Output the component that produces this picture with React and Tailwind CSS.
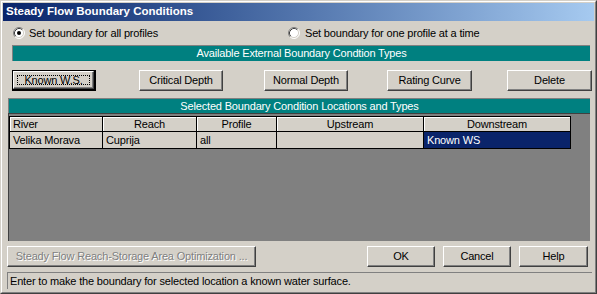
import React from 'react';

const Radio = ({ checked }) => (
  <svg width="12" height="12" viewBox="0 0 12 12" className="shrink-0">
    <circle cx="6" cy="6" r="5" fill="#fff" />
    <path d="M2.11 9.89 A5.5 5.5 0 0 1 9.89 2.11" fill="none" stroke="#808080" strokeWidth="1" />
    <path d="M9.89 2.11 A5.5 5.5 0 0 1 2.11 9.89" fill="none" stroke="#fff" strokeWidth="1" />
    <path d="M2.82 9.18 A4.5 4.5 0 0 1 9.18 2.82" fill="none" stroke="#404040" strokeWidth="1" />
    <path d="M9.18 2.82 A4.5 4.5 0 0 1 2.82 9.18" fill="none" stroke="#d4d0c8" strokeWidth="1" />
    {checked && <circle cx="6" cy="6" r="2" fill="#000" />}
  </svg>
);

const Btn = ({ children, className = '', def = false, disabled = false }) => {
  if (def) {
    return (
      <div className={`border border-black border-r-2 border-b-2 ${className}`}>
        <div className="h-full border-t border-l border-white border-r border-b border-r-[#404040] border-b-[#404040] shadow-[inset_-1px_-1px_0_#808080] bg-[#d4d0c8] p-[3px]">
          <div className="h-full border border-dotted border-black flex items-center justify-center">{children}</div>
        </div>
      </div>
    );
  }
  return (
    <div
      className={`border-t border-l border-white border-r border-b border-r-[#404040] border-b-[#404040] shadow-[inset_-1px_-1px_0_#808080] bg-[#d4d0c8] flex items-center justify-center ${
        disabled ? 'text-[#808080] [text-shadow:1px_1px_0_#fff]' : ''
      } ${className}`}
    >
      {children}
    </div>
  );
};

const TealBar = ({ children, className = '' }) => (
  <div
    className={`bg-[#008080] border-t border-l border-[#808080] border-r-white border-b-white text-white flex items-center justify-center leading-none ${className}`}
  >
    {children}
  </div>
);

const cols = [
  { name: 'River', left: true },
  { name: 'Reach' },
  { name: 'Profile' },
  { name: 'Upstream' },
  { name: 'Downstream' },
];

const row = ['Velika Morava', 'Cuprija', 'all', '', 'Known WS'];

export default function App() {
  return (
    <div className="w-[597px] h-[294px] overflow-hidden bg-[#d4d0c8] font-['Liberation_Sans',Arial,sans-serif] text-[11px] tracking-[-0.17px] text-black">
      <div className="w-full h-full border border-[#d4d0c8] border-r-[#404040] border-b-[#404040]">
        <div className="w-full h-full border border-white border-r-[#808080] border-b-[#808080] p-[1px] flex flex-col">
          {/* title bar */}
          <div className="h-[18px] shrink-0 bg-gradient-to-r from-[#0a246a] to-[#a6caf0] flex items-center pl-[3px]">
            <span className="text-white font-bold text-[11.5px] tracking-normal leading-none">Steady Flow Boundary Conditions</span>
          </div>

          {/* radios */}
          <div className="mt-[6px] h-[12px] flex items-center">
            <div className="ml-[10px] flex items-center">
              <Radio checked />
              <span className="ml-[4px] leading-none">Set boundary for all profiles</span>
            </div>
            <div className="ml-[130px] flex items-center">
              <Radio />
              <span className="ml-[5px] leading-none">Set boundary for one profile at a time</span>
            </div>
          </div>

          <TealBar className="mt-[6px] ml-[9px] w-[578px] h-[16px]">Available External Boundary Condtion Types</TealBar>

          {/* boundary type buttons */}
          <div className="mt-[9px] flex h-[21px]">
            <Btn def className="ml-[9px] w-[84px]">Known W.S.</Btn>
            <Btn className="ml-[43px] w-[84px]">Critical Depth</Btn>
            <Btn className="ml-[41px] w-[84px]">Normal Depth</Btn>
            <Btn className="ml-[39px] w-[85px]">Rating Curve</Btn>
            <Btn className="ml-[35px] w-[85px]">Delete</Btn>
          </div>

          <TealBar className="mt-[7px] ml-[5px] w-[582px] h-[15px]">Selected Boundary Condition Locations and Types</TealBar>

          {/* grid */}
          <div className="ml-[5px] w-[582px] h-[128px] bg-[#808080] border-t border-l border-[#404040] border-r-white border-b-white pt-[2px]">
            <div className="grid grid-cols-[93px_94px_80px_147px_147px] w-fit border-t border-l border-black">
              {cols.map((c) => (
                <div
                  key={c.name}
                  className={`h-[15px] bg-[#d4d0c8] border-r border-b border-black shadow-[inset_1px_1px_0_#fff] flex items-center leading-none ${
                    c.left ? 'pl-[3px]' : 'justify-center'
                  }`}
                >
                  {c.name}
                </div>
              ))}
              {row.map((v, i) => (
                <div
                  key={i}
                  className={`h-[17px] border-r border-b border-black flex items-center pl-[3px] leading-none ${
                    i === 4 ? 'bg-[#0a246a] text-white' : 'bg-[#d4d0c8]'
                  }`}
                >
                  {v}
                </div>
              ))}
            </div>
          </div>

          {/* bottom buttons */}
          <div className="mt-[5px] flex h-[21px]">
            <Btn disabled className="ml-[4px] w-[249px]">Steady Flow Reach-Storage Area Optimization ...</Btn>
            <Btn className="ml-[111px] w-[68px]">OK</Btn>
            <Btn className="ml-[8px] w-[68px]">Cancel</Btn>
            <Btn className="ml-[8px] w-[69px]">Help</Btn>
          </div>

          {/* status bar */}
          <div className="mt-[5px] ml-[4px] w-[585px] h-[17px] border-t border-l border-[#808080] border-r-white border-b-white flex items-center pl-[2px] leading-none">
            Enter to make the boundary for selected location a known water surface.
          </div>
        </div>
      </div>
    </div>
  );
}
